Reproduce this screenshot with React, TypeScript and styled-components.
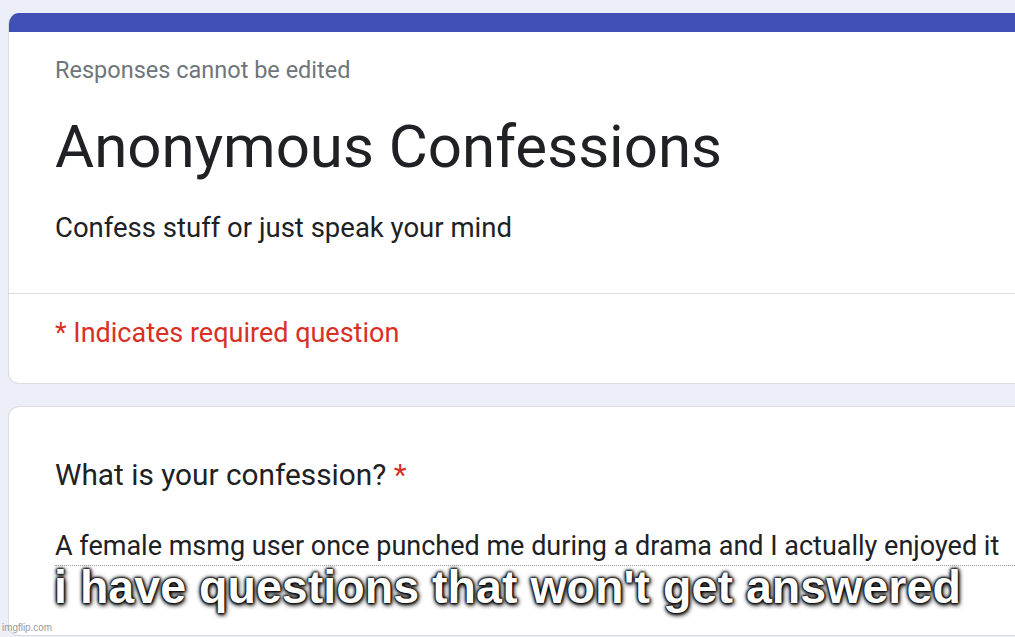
import React from 'react';
import styled, { createGlobalStyle } from 'styled-components';

const GlobalStyle = createGlobalStyle`
  html, body {
    margin: 0;
    padding: 0;
    background: #eceef8;
    font-family: Roboto, "Noto Sans", Arial, sans-serif;
    overflow: hidden;
  }
`;

const Page = styled.div`
  position: relative;
  width: 1015px;
  height: 637px;
  padding: 13px 0 0 8px;
  box-sizing: border-box;
  display: flex;
  flex-direction: column;
  gap: 22px;
`;

const Card = styled.div<{ $accent?: boolean }>`
  background: #fff;
  border: 1px solid #dadce0;
  border-right: none;
  border-radius: 11px 0 0 11px;
  overflow: hidden;
  ${(p) => (p.$accent ? 'border-top: none;' : '')}
`;

const AccentBar = styled.div`
  height: 19px;
  background: #3f51b5;
`;

const Header = styled.div`
  padding: 23px 0 0 46px;
  height: 261px;
  box-sizing: border-box;
`;

const Note = styled.div`
  font-size: 23.5px;
  color: #70757a;
  line-height: 30px;
`;

const Title = styled.h1`
  margin: 26px 0 0;
  font-size: 60px;
  font-weight: 400;
  color: #202124;
  line-height: 72px;
`;

const Description = styled.div`
  margin-top: 27px;
  font-size: 27.5px;
  color: #202124;
  line-height: 36px;
`;

const Divider = styled.hr`
  margin: 0;
  border: none;
  border-top: 1px solid #dadce0;
`;

const Required = styled.div`
  padding: 21px 0 0 46px;
  height: 89px;
  box-sizing: border-box;
  font-size: 27px;
  color: #d93025;
  line-height: 36px;
`;

const Question = styled.div`
  padding: 48px 0 0 46px;
  height: 228px;
  box-sizing: border-box;
`;

const Label = styled.div`
  font-size: 29.8px;
  color: #202124;
  line-height: 40px;
`;

const Star = styled.span`
  color: #d93025;
`;

const Answer = styled.div`
  margin-top: 33px;
  font-size: 27px;
  color: #202124;
  line-height: 36px;
  padding-bottom: 1px;
  border-bottom: 1px dotted #9aa0a6;
  white-space: nowrap;
`;

// meme caption laid over the screenshot
const Caption = styled.div`
  position: absolute;
  left: 54px;
  top: 560px;
  font-family: "Liberation Sans", Arial, sans-serif;
  font-size: 46.6px;
  font-weight: 700;
  color: #fff;
  white-space: nowrap;
  text-shadow: 0 0 2px #000, 0 0 2px #000, 0 0 3px #000, 0 0 5px #000, 1px 2px 5px #000;
`;

const Watermark = styled.div`
  position: absolute;
  left: 2px;
  top: 621px;
  font-family: "Liberation Sans", Arial, sans-serif;
  font-size: 11px;
  color: #9a9a9a;
  transform-origin: left top;
  transform: scaleX(0.9);
`;

export default function App() {
  return (
    <>
      <GlobalStyle />
      <Page>
        <Card $accent>
          <AccentBar />
          <Header>
            <Note>Responses cannot be edited</Note>
            <Title>Anonymous Confessions</Title>
            <Description>Confess stuff or just speak your mind</Description>
          </Header>
          <Divider />
          <Required>* Indicates required question</Required>
        </Card>
        <Card>
          <Question>
            <Label>
              What is your confession? <Star>*</Star>
            </Label>
            <Answer>A female msmg user once punched me during a drama and I actually enjoyed it</Answer>
          </Question>
        </Card>
        <Caption>i have questions that won't get answered</Caption>
        <Watermark>imgflip.com</Watermark>
      </Page>
    </>
  );
}
